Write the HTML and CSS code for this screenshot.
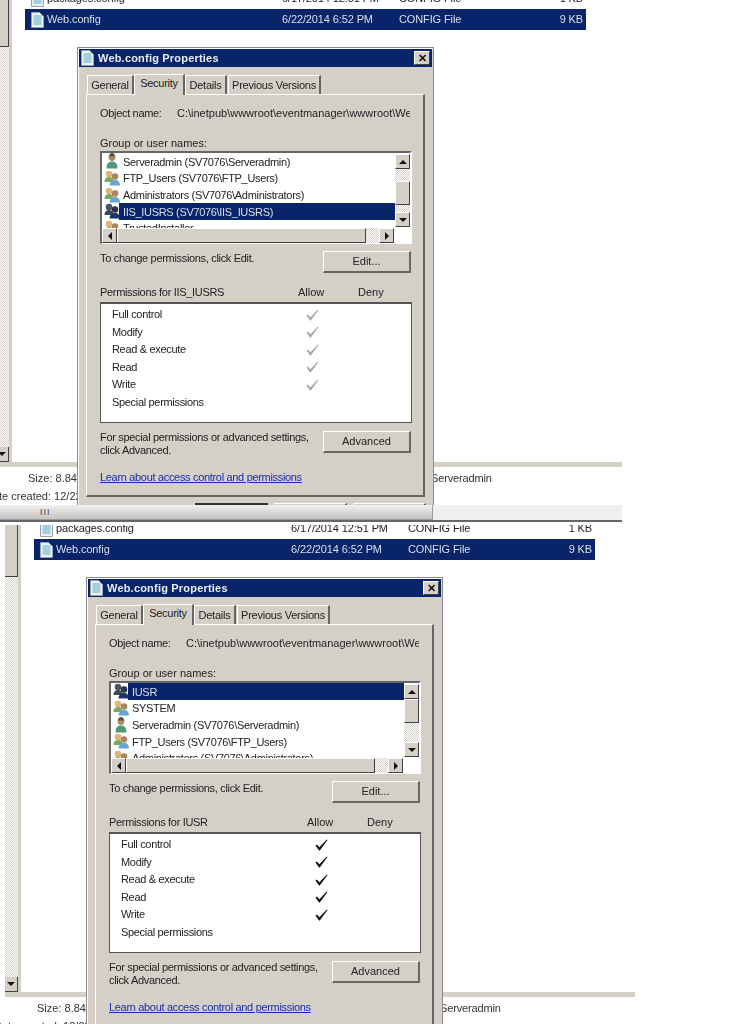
FILE: index.html
```html
<!DOCTYPE html>
<html lang="en">
<head>
    <meta charset="UTF-8">
    <meta name="viewport" content="width=device-width, initial-scale=1.0">
    <title>Web.config permissions</title>
    <link rel="stylesheet" href="styles.css">
</head>
<body>
    <svg class="icon-defs" width="0" height="0" aria-hidden="true">
        <symbol id="file" viewBox="0 0 13 16">
            <path d="M.5.5h8l4 4v11H.5z" fill="#eef1f4" stroke="#9aa0a8"/>
            <rect x="2.500" y="3" width="8" height="10" fill="#a4cfe0"/>
        </symbol>
        <symbol id="user" viewBox="0 0 16 16">
            <circle cx="8" cy="4.500" r="3.400" fill="#b08a62"/>
            <path d="M5 3.500c0-2.500 1.500-3.500 3-3.500s3 1 3 3.500z" fill="#4c5a3c"/>
            <path d="M2.500 15.500c0-5 2-7 5.500-7s5.500 2 5.500 7z" fill="#4f9a7c"/>
        </symbol>
        <symbol id="users" viewBox="0 0 16 16">
            <circle cx="5" cy="4" r="3.300" fill="#e0b47c"/>
            <path d="M.5 12c0-3.500 2-5 4.500-5s4.500 1.500 4.500 5z" fill="#78ad5c"/>
            <circle cx="11" cy="6.500" r="3.300" fill="#a98660"/>
            <path d="M5.500 15.500c0-3.500 2.500-5.500 5.500-5.500s5 2 5 5.500z" fill="#6aa4d8"/>
        </symbol>
        <symbol id="users-dark" viewBox="0 0 16 16">
            <circle cx="5" cy="4" r="3.300" fill="#4c5568"/>
            <path d="M.5 12c0-3.500 2-5 4.500-5s4.500 1.500 4.500 5z" fill="#3c4a58"/>
            <circle cx="11" cy="6.500" r="3.300" fill="#2c3448"/>
            <path d="M5.500 15.500c0-3.500 2.500-5.500 5.500-5.500s5 2 5 5.500z" fill="#1c3468"/>
        </symbol>
        <symbol id="check" viewBox="0 0 13 12">
            <path d="M.5 6.500l1.300-1 2.600 2.700L11.800.5l.7.5-7.700 10.500H4z" fill="currentColor"/>
        </symbol>
    </svg>

    <section class="shot shot-first">
        <div class="window">
            <div class="browser">
                <div class="side-scroll">
                    <div class="side-thumb"></div>
                    <div class="hatch"></div>
                    <div class="side-down"><span class="arrow arrow-down"></span></div>
                </div>
                <div class="side-line"></div>
                <div class="files">
                    <div class="file-row">
                        <svg class="file-icon"><use href="#file"/></svg>
                        <span class="file-name">packages.config</span>
                        <span class="file-date">6/17/2014 12:51 PM</span>
                        <span class="file-type">CONFIG File</span>
                        <span class="file-size">1 KB</span>
                    </div>
                    <div class="file-row selected">
                        <svg class="file-icon"><use href="#file"/></svg>
                        <span class="file-name">Web.config</span>
                        <span class="file-date">6/22/2014 6:52 PM</span>
                        <span class="file-type">CONFIG File</span>
                        <span class="file-size">9 KB</span>
                    </div>
                </div>
            </div>
            <div class="status-line"></div>
            <div class="details">
                <div class="detail-left">
                    <div>Size: 8.84 KB</div>
                    <div>Date created: 12/22/2013</div>
                </div>
                <div class="detail-right">Serveradmin</div>
            </div>
            <div class="h-bar">
                <div class="h-bar-thumb"><span class="grip">III</span></div>
            </div>

            <div class="dialog">
                <div class="title-bar">
                    <svg class="title-icon"><use href="#file"/></svg>
                    <span class="title-text">Web.config Properties</span>
                    <span class="close">&#10005;</span>
                </div>
                <div class="tabs">
                    <span class="tab tab-general">General</span>
                    <span class="tab tab-active">Security</span>
                    <span class="tab tab-details">Details</span>
                    <span class="tab tab-versions">Previous Versions</span>
                </div>
                <div class="panel">
                    <div class="object-line">
                        <span class="object-label">Object name:</span>
                        <span class="object-path">C:\inetpub\wwwroot\eventmanager\wwwroot\Web.config</span>
                    </div>
                    <div class="group-label">Group or user names:</div>
                    <div class="list-box">
                        <div class="list-main">
                            <div class="list-rows">
                                <div class="list-row"><svg class="row-icon"><use href="#user"/></svg><span class="row-text">Serveradmin (SV7076\Serveradmin)</span></div>
                                <div class="list-row"><svg class="row-icon"><use href="#users"/></svg><span class="row-text">FTP_Users (SV7076\FTP_Users)</span></div>
                                <div class="list-row"><svg class="row-icon"><use href="#users"/></svg><span class="row-text">Administrators (SV7076\Administrators)</span></div>
                                <div class="list-row selected"><svg class="row-icon"><use href="#users-dark"/></svg><span class="row-text">IIS_IUSRS (SV7076\IIS_IUSRS)</span></div>
                                <div class="list-row"><svg class="row-icon"><use href="#users"/></svg><span class="row-text">TrustedInstaller</span></div>
                            </div>
                            <div class="v-scroll">
                                <div class="scroll-btn"><span class="arrow arrow-up"></span></div>
                                <div class="hatch v-before-mid"></div>
                                <div class="v-thumb"></div>
                                <div class="hatch v-after"></div>
                                <div class="scroll-btn"><span class="arrow arrow-down"></span></div>
                            </div>
                        </div>
                        <div class="list-hscroll">
                            <div class="scroll-btn"><span class="arrow arrow-left"></span></div>
                            <div class="hs-thumb"></div>
                            <div class="hatch hs-rest"></div>
                            <div class="scroll-btn"><span class="arrow arrow-right"></span></div>
                        </div>
                    </div>
                    <div class="action-line action-edit">
                        <span class="action-text">To change permissions, click Edit.</span>
                        <span class="btn">Edit...</span>
                    </div>
                    <div class="perm-head">
                        <span class="perm-for">Permissions for IIS_IUSRS</span>
                        <span class="perm-allow">Allow</span>
                        <span class="perm-deny">Deny</span>
                    </div>
                    <div class="perm-box inherited">
                        <div class="perm-row"><span class="perm-name">Full control</span><svg class="check"><use href="#check"/></svg></div>
                        <div class="perm-row"><span class="perm-name">Modify</span><svg class="check"><use href="#check"/></svg></div>
                        <div class="perm-row"><span class="perm-name">Read &amp; execute</span><svg class="check"><use href="#check"/></svg></div>
                        <div class="perm-row"><span class="perm-name">Read</span><svg class="check"><use href="#check"/></svg></div>
                        <div class="perm-row"><span class="perm-name">Write</span><svg class="check"><use href="#check"/></svg></div>
                        <div class="perm-row"><span class="perm-name">Special permissions</span></div>
                    </div>
                    <div class="action-line action-advanced">
                        <span class="action-text">For special permissions or advanced settings,<br>click Advanced.</span>
                        <span class="btn">Advanced</span>
                    </div>
                    <a class="learn-link" href="#">Learn about access control and permissions</a>
                </div>
                <div class="dialog-buttons">
                    <span class="btn btn-default">OK</span>
                    <span class="btn">Cancel</span>
                    <span class="btn">Apply</span>
                </div>
            </div>
        </div>
    </section>

    <section class="shot shot-second">
        <div class="window">
            <div class="browser">
                <div class="side-scroll">
                    <div class="side-thumb"></div>
                    <div class="hatch"></div>
                    <div class="side-down"><span class="arrow arrow-down"></span></div>
                </div>
                <div class="side-line"></div>
                <div class="files">
                    <div class="file-row">
                        <svg class="file-icon"><use href="#file"/></svg>
                        <span class="file-name">packages.config</span>
                        <span class="file-date">6/17/2014 12:51 PM</span>
                        <span class="file-type">CONFIG File</span>
                        <span class="file-size">1 KB</span>
                    </div>
                    <div class="file-row selected">
                        <svg class="file-icon"><use href="#file"/></svg>
                        <span class="file-name">Web.config</span>
                        <span class="file-date">6/22/2014 6:52 PM</span>
                        <span class="file-type">CONFIG File</span>
                        <span class="file-size">9 KB</span>
                    </div>
                </div>
            </div>
            <div class="status-line"></div>
            <div class="details">
                <div class="detail-left">
                    <div>Size: 8.84 KB</div>
                    <div>Date created: 12/22/2013</div>
                </div>
                <div class="detail-right">Serveradmin</div>
            </div>

            <div class="dialog">
                <div class="title-bar">
                    <svg class="title-icon"><use href="#file"/></svg>
                    <span class="title-text">Web.config Properties</span>
                    <span class="close">&#10005;</span>
                </div>
                <div class="tabs">
                    <span class="tab tab-general">General</span>
                    <span class="tab tab-active">Security</span>
                    <span class="tab tab-details">Details</span>
                    <span class="tab tab-versions">Previous Versions</span>
                </div>
                <div class="panel">
                    <div class="object-line">
                        <span class="object-label">Object name:</span>
                        <span class="object-path">C:\inetpub\wwwroot\eventmanager\wwwroot\Web.config</span>
                    </div>
                    <div class="group-label">Group or user names:</div>
                    <div class="list-box">
                        <div class="list-main">
                            <div class="list-rows">
                                <div class="list-row selected"><svg class="row-icon"><use href="#users-dark"/></svg><span class="row-text">IUSR</span></div>
                                <div class="list-row"><svg class="row-icon"><use href="#users"/></svg><span class="row-text">SYSTEM</span></div>
                                <div class="list-row"><svg class="row-icon"><use href="#user"/></svg><span class="row-text">Serveradmin (SV7076\Serveradmin)</span></div>
                                <div class="list-row"><svg class="row-icon"><use href="#users"/></svg><span class="row-text">FTP_Users (SV7076\FTP_Users)</span></div>
                                <div class="list-row"><svg class="row-icon"><use href="#users"/></svg><span class="row-text">Administrators (SV7076\Administrators)</span></div>
                            </div>
                            <div class="v-scroll">
                                <div class="scroll-btn"><span class="arrow arrow-up"></span></div>
                                <div class="v-thumb"></div>
                                <div class="hatch v-after"></div>
                                <div class="scroll-btn"><span class="arrow arrow-down"></span></div>
                            </div>
                        </div>
                        <div class="list-hscroll">
                            <div class="scroll-btn"><span class="arrow arrow-left"></span></div>
                            <div class="hs-thumb"></div>
                            <div class="hatch hs-rest"></div>
                            <div class="scroll-btn"><span class="arrow arrow-right"></span></div>
                        </div>
                    </div>
                    <div class="action-line action-edit">
                        <span class="action-text">To change permissions, click Edit.</span>
                        <span class="btn">Edit...</span>
                    </div>
                    <div class="perm-head">
                        <span class="perm-for">Permissions for IUSR</span>
                        <span class="perm-allow">Allow</span>
                        <span class="perm-deny">Deny</span>
                    </div>
                    <div class="perm-box">
                        <div class="perm-row"><span class="perm-name">Full control</span><svg class="check"><use href="#check"/></svg></div>
                        <div class="perm-row"><span class="perm-name">Modify</span><svg class="check"><use href="#check"/></svg></div>
                        <div class="perm-row"><span class="perm-name">Read &amp; execute</span><svg class="check"><use href="#check"/></svg></div>
                        <div class="perm-row"><span class="perm-name">Read</span><svg class="check"><use href="#check"/></svg></div>
                        <div class="perm-row"><span class="perm-name">Write</span><svg class="check"><use href="#check"/></svg></div>
                        <div class="perm-row"><span class="perm-name">Special permissions</span></div>
                    </div>
                    <div class="action-line action-advanced">
                        <span class="action-text">For special permissions or advanced settings,<br>click Advanced.</span>
                        <span class="btn">Advanced</span>
                    </div>
                    <a class="learn-link" href="#">Learn about access control and permissions</a>
                </div>
            </div>
        </div>
    </section>
</body>
</html>
```

FILE: styles.css
```css
body {
    margin: 0;
    background-color: #fff;
    font-family: "Liberation Sans", Arial, sans-serif;
    font-size: 11px;
    line-height: 13px;
    letter-spacing: -0.32px;
    color: #222;
    overflow: hidden;
}
.icon-defs {
    position: absolute;
}

/* one pasted screenshot */
.shot {
    position: relative;
    overflow: hidden;
    filter: blur(0.4px);
}
.shot-first {
    height: 525px;
}
.shot-second {
    height: 499px;
}
.window {
    position: relative;
    display: flex;
    flex-direction: column;
}
.shot-first .window {
    width: 626px;
    margin: -12px 0 0 -4px;
}
.shot-second .window {
    width: 630px;
    margin: -7px 0 0 5px;
}

/* file list behind the dialog */
.browser {
    height: 474px;
    display: flex;
}
.side-scroll {
    width: 13px;
    display: flex;
    flex-direction: column;
}
.side-thumb {
    height: 59px;
    background-color: #d4d0c8;
    border-right: 1px solid #404040;
    border-bottom: 1px solid #404040;
    box-sizing: border-box;
}
.hatch {
    flex: 1;
    background: repeating-conic-gradient(#d4d0c8 0 25%, #fff 0 50%) 0 0 / 2px 2px;
}
.side-down {
    height: 15px;
    background-color: #d4d0c8;
    border-right: 1px solid #404040;
    border-bottom: 1px solid #404040;
    box-sizing: border-box;
    display: flex;
    align-items: center;
    justify-content: center;
}
.side-line {
    width: 3px;
    background-color: #d4d0c8;
}
.files {
    margin-left: 13px;
    width: 561px;
}
.file-row {
    height: 21px;
    display: flex;
    align-items: center;
    color: #222;
    letter-spacing: -0.12px;
    box-sizing: border-box;
}
.file-row.selected {
    background-color: #0a246a;
    color: #d8dfee;
}
.file-icon {
    width: 13px;
    height: 16px;
    margin-left: 6px;
    flex: none;
}
.file-name {
    margin-left: 3px;
    width: 235px;
}
.file-date {
    width: 117px;
}
.file-type {
    flex: 1;
}
.file-size {
    margin-right: 3px;
}
.status-line {
    height: 5px;
    background-color: #d4d0c8;
}
.details {
    height: 38px;
    display: flex;
    color: #333;
    padding-top: 2px;
    box-sizing: border-box;
    letter-spacing: 0;
}
.detail-left {
    width: 200px;
    line-height: 18px;
    white-space: nowrap;
}
.detail-left div:first-child {
    padding-left: 32px;
}
.detail-left div:last-child {
    margin-left: -11px;
}
.detail-right {
    margin-left: 235px;
    line-height: 18px;
    letter-spacing: -0.15px;
}
.h-bar {
    position: relative;
    z-index: 2;
    height: 17px;
    background-color: #efefef;
    border-bottom: 2px solid #666;
    box-sizing: border-box;
}
.h-bar-thumb {
    width: 437px;
    height: 15px;
    background: linear-gradient(to bottom, #f0f0f0, #c4c4c4);
    border-right: 1px solid #999;
    border-bottom: 1px solid #999;
    box-sizing: border-box;
    line-height: 14px;
    font-size: 9px;
    letter-spacing: 1px;
    color: #444;
}
.grip {
    display: block;
    width: 22px;
    margin-left: 44px;
}

/* properties dialog */
.dialog {
    position: absolute;
    left: 81px;
    top: 59px;
    z-index: 1;
    width: 357px;
    height: 470px;
    overflow: hidden;
    box-sizing: border-box;
    background-color: #d4d0c8;
    border: 1px solid #8a8a8a;
    box-shadow: inset 1px 1px 0 #fff;
    padding: 1px;
}
.title-bar {
    height: 18px;
    background-color: #0a246a;
    color: #e8ecf4;
    font-weight: bold;
    letter-spacing: 0.2px;
    display: flex;
    align-items: center;
    padding: 0 2px;
}
.title-icon {
    width: 13px;
    height: 16px;
    margin-right: 4px;
    flex: none;
}
.title-text {
    flex: 1;
}
.close {
    width: 16px;
    height: 14px;
    background-color: #d4d0c8;
    border: 1px solid #fff;
    border-right-color: #404040;
    border-bottom-color: #404040;
    box-sizing: border-box;
    color: #111;
    font-size: 11px;
    font-weight: bold;
    line-height: 12px;
    letter-spacing: 0;
    text-align: center;
}
.tabs {
    height: 20px;
    margin-top: 7px;
    padding-left: 8px;
    display: flex;
    align-items: flex-end;
    letter-spacing: -0.25px;
}
.tab {
    height: 19px;
    box-sizing: border-box;
    border-top: 1px solid #fff;
    border-left: 1px solid #fff;
    border-right: 2px solid #666;
    text-align: center;
    line-height: 19px;
    white-space: nowrap;
}
.tab-general {
    width: 47px;
}
.tab-active {
    width: 51px;
    height: 21px;
    line-height: 17px;
    margin-bottom: -1px;
    background-color: #d4d0c8;
    position: relative;
    z-index: 1;
}
.tab-details {
    width: 42px;
}
.tab-versions {
    width: 93px;
    margin-left: 1px;
}
.panel {
    width: 339px;
    height: 403px;
    margin-left: 7px;
    padding: 12px 13px 0;
    box-sizing: border-box;
    border-top: 1px solid #fff;
    border-left: 1px solid #fff;
    border-right: 2px solid #666;
    border-bottom: 2px solid #666;
    display: flex;
    flex-direction: column;
}
.object-line {
    height: 15px;
    display: flex;
    white-space: nowrap;
    overflow: hidden;
    width: 310px;
}
.object-label {
    width: 77px;
    flex: none;
}
.object-path {
    letter-spacing: 0;
}
.group-label {
    margin-top: 15px;
    height: 14px;
    letter-spacing: 0;
}
.list-box {
    width: 312px;
    height: 93px;
    flex: none;
    box-sizing: border-box;
    border: 2px solid #666;
    border-right-color: #fff;
    border-bottom: 1px solid #fff;
    background-color: #fff;
    display: flex;
    flex-direction: column;
}
.list-main {
    height: 75px;
    flex: none;
    display: flex;
    overflow: hidden;
}
.list-rows {
    flex: 1;
    overflow: hidden;
}
.list-row {
    height: 16.67px;
    display: flex;
    align-items: center;
    padding-left: 2px;
    white-space: nowrap;
}
.row-icon {
    width: 16px;
    height: 16px;
    flex: none;
    margin-right: 1px;
}
.row-text {
    padding: 2px 0 0 2px;
    color: #222;
}
.list-row.selected {
    background: linear-gradient(#0a246a, #0a246a) 17px 0 no-repeat;
}
.list-row.selected .row-text {
    color: #d8dfee;
}
.v-scroll {
    width: 15px;
    padding: 1px 0;
    box-sizing: border-box;
    display: flex;
    flex-direction: column;
}
.scroll-btn {
    width: 15px;
    height: 15px;
    flex: none;
    box-sizing: border-box;
    background-color: #d4d0c8;
    border: 1px solid #fff;
    border-right-color: #404040;
    border-bottom-color: #404040;
    display: flex;
    align-items: center;
    justify-content: center;
}
.v-thumb {
    height: 24px;
    flex: none;
    box-sizing: border-box;
    background-color: #d4d0c8;
    border: 1px solid #fff;
    border-right-color: #404040;
    border-bottom-color: #404040;
}
.v-before-mid {
    flex: 0 0 12px;
}
.v-after {
    flex: 1;
}
.list-hscroll {
    height: 15px;
    flex: none;
    width: 292px;
    display: flex;
}
.hs-thumb {
    width: 249px;
    box-sizing: border-box;
    background-color: #d4d0c8;
    border: 1px solid #fff;
    border-right-color: #404040;
    border-bottom-color: #404040;
}
.hs-rest {
    flex: 1;
}
.arrow {
    width: 0;
    height: 0;
    display: block;
    border: 4px solid transparent;
}
.arrow-up {
    border-top-width: 0;
    border-bottom-color: #111;
}
.arrow-down {
    border-bottom-width: 0;
    border-top-color: #111;
}
.arrow-left {
    border-left-width: 0;
    border-right-color: #111;
}
.arrow-right {
    border-right-width: 0;
    border-left-color: #111;
}
.action-line {
    display: flex;
    justify-content: space-between;
    width: 311px;
}
.action-edit {
    margin-top: 7px;
    height: 22px;
}
.action-edit .action-text {
    padding-top: 1px;
}
.action-advanced {
    margin-top: 8px;
    height: 30px;
}
.btn {
    width: 88px;
    height: 22px;
    flex: none;
    box-sizing: border-box;
    background-color: #d4d0c8;
    border: 1px solid #fff;
    border-right: 2px solid #666;
    border-bottom: 2px solid #666;
    text-align: center;
    line-height: 19px;
    letter-spacing: 0;
}
.perm-head {
    margin-top: 13px;
    height: 16px;
    display: flex;
    width: 312px;
}
.perm-for {
    width: 198px;
}
.perm-allow {
    width: 60px;
    letter-spacing: 0;
}
.perm-deny {
    letter-spacing: 0;
}
.perm-box {
    width: 312px;
    height: 121px;
    flex: none;
    box-sizing: border-box;
    padding: 2px 0 0 11px;
    border: 1px solid #555;
    border-width: 2px 1px 1px 1px;
    background-color: #fff;
}
.perm-row {
    height: 17.5px;
    display: flex;
    align-items: center;
}
.perm-name {
    width: 194px;
}
.check {
    width: 13px;
    height: 12px;
    color: #111;
}
.inherited .check {
    color: #a8a8a8;
}
.learn-link {
    margin-top: 10px;
    color: #1a2ea8;
    text-decoration: underline;
}
.dialog-buttons {
    margin-top: 6px;
    margin-left: 116px;
    display: flex;
    gap: 6px;
}
.dialog-buttons .btn {
    width: 73px;
}
.btn-default {
    border: 2px solid #333;
}
```
